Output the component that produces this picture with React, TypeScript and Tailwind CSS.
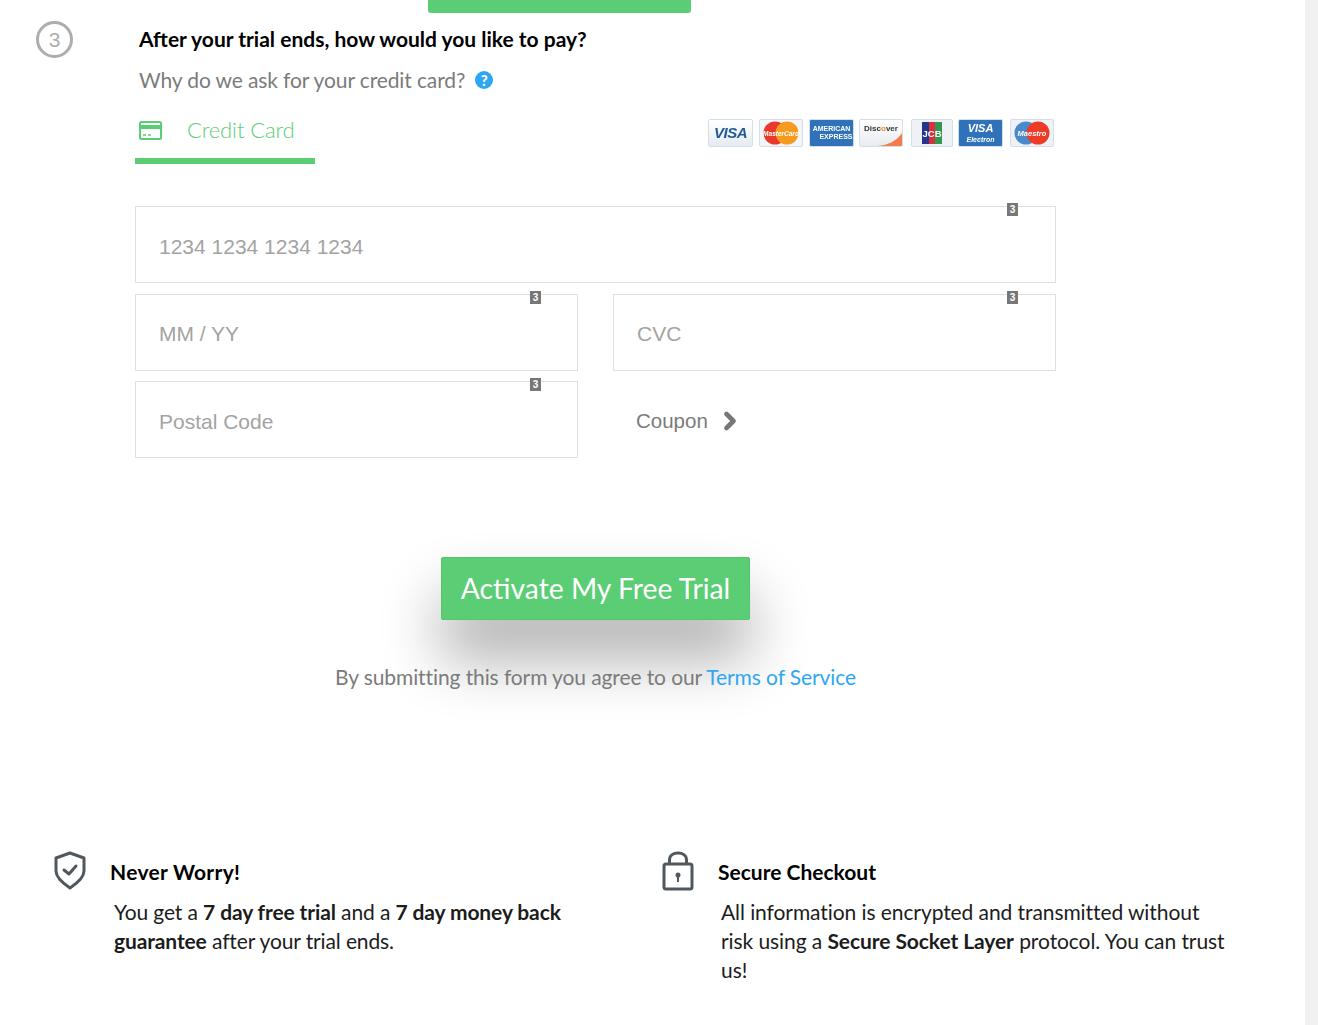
import { ChevronRight } from 'lucide-react';

const inputFont = { fontFamily: '"Liberation Sans", Arial, sans-serif' };

function CardField({ label, wide, shifted, raised }: { label: string; wide?: boolean; shifted?: boolean; raised?: boolean }) {
  return (
    <div
      className={`relative flex h-[77px] items-center border border-[#e0e0e0] pl-[23px] text-[21px] text-[#a3a3a3] ${wide ? 'w-[921px]' : 'w-[443px]'} ${raised ? 'pt-[2px]' : 'pt-[4px]'}`}
      style={inputFont}
    >
      {label}
      <span
        className={`absolute top-[-4px] flex h-[13px] w-[11px] items-center justify-center bg-[#777777] text-[10px] font-bold leading-none text-white ${shifted ? 'right-[37px]' : 'right-[36px]'}`}
      >
        3
      </span>
    </div>
  );
}

// logo kartu, blur dikit biar mirip gambar aslinya
function CardLogos() {
  const base = 'flex h-[28px] items-center justify-center overflow-hidden rounded-[2px] border border-[#d5dde6] blur-[0.5px]';
  return (
    <div className="flex items-center" style={inputFont}>
      <div className={`${base} w-[45px] bg-gradient-to-b from-[#ffffff] to-[#e6ebf2]`}>
        <span className="text-[15px] font-bold italic tracking-[-0.5px] text-[#1f5a96]">VISA</span>
      </div>
      <div className={`${base} ml-[6px] w-[44px] bg-[#f4f6f9]`}>
        <svg width="36" height="24" viewBox="0 0 36 24">
          <circle cx="12" cy="12" r="11.5" fill="#e8392b" />
          <circle cx="24" cy="12" r="11.5" fill="#f79b1f" />
          <text x="18" y="14.5" textAnchor="middle" fontSize="6.5" fontWeight="700" fontStyle="italic" fill="#ffffff">MasterCard</text>
        </svg>
      </div>
      <div className={`${base} ml-[6px] w-[45px] flex-col bg-[#2f72b9] text-[7px] font-bold leading-[8px] text-white`}>
        <span>AMERICAN</span>
        <span className="pl-[9px]">EXPRESS</span>
      </div>
      <div className={`${base} relative ml-[5px] w-[44px] items-start bg-gradient-to-b from-[#ffffff] to-[#e8ebf0] pt-[3px]`}>
        <span className="text-[8px] font-bold text-[#333333]">Disc<span className="text-[#f28a30]">o</span>ver</span>
        <svg className="absolute bottom-0 right-0" width="24" height="13" viewBox="0 0 24 13">
          <path d="M24 0V13H0C10 12 19 8 24 0Z" fill="#f47b4c" />
        </svg>
      </div>
      <div className={`${base} ml-[8px] w-[42px] bg-[#eef1f6]`}>
        <svg width="20" height="22" viewBox="0 0 20 22">
          <rect width="7" height="22" fill="#26348f" />
          <rect x="7" width="6" height="22" fill="#d8313c" />
          <rect x="13" width="7" height="22" fill="#2f9a4b" />
          <text x="10" y="15" textAnchor="middle" fontSize="9.5" fontWeight="700" fill="#ffffff">JCB</text>
        </svg>
      </div>
      <div className={`${base} ml-[5px] w-[45px] flex-col bg-[#2f72b9] text-white`}>
        <span className="text-[11px] font-bold italic leading-[12px]">VISA</span>
        <span className="mt-[2px] text-[7px] font-bold italic leading-[8px]">Electron</span>
      </div>
      <div className={`${base} ml-[7px] w-[44px] bg-[#eef1f6]`}>
        <svg width="36" height="24" viewBox="0 0 36 24">
          <circle cx="12" cy="12" r="11.5" fill="#4a8acb" />
          <circle cx="24" cy="12" r="11.5" fill="#ee3b25" />
          <text x="18" y="14.5" textAnchor="middle" fontSize="7.5" fontWeight="700" fontStyle="italic" fill="#ffffff">Maestro</text>
        </svg>
      </div>
    </div>
  );
}

export default function App() {
  return (
    <div className="flex h-[1025px] overflow-hidden bg-white" style={{ fontFamily: 'Lato, sans-serif' }}>
      <div className="w-[1305px]">
        {/* tombol step sebelumnya, kepotong di atas */}
        <div className="ml-[428px] h-[13px] w-[263px] rounded-b-[3px] bg-[#5bce75]" />

        {/* STEP 3 */}
        <div className="mt-[8px] flex pl-[36px]">
          <div className="flex h-[37px] w-[37px] items-center justify-center rounded-full border-[3px] border-[#adadad] text-[21px] text-[#adadad]" style={inputFont}>
            3
          </div>
          <div className="ml-[66px] pt-[3px]">
            <h2 className="text-[21px] font-bold leading-[30px] text-black">After your trial ends, how would you like to pay?</h2>
            <div className="mt-[11px] flex items-center text-[21px] leading-[30px] tracking-[-0.12px] text-[#7b7b7b]">
              Why do we ask for your credit card?
              <span className="ml-[10px] flex h-[18px] w-[18px] items-center justify-center rounded-full bg-[#2ea7f2] text-[15px] font-black leading-none text-white">?</span>
            </div>
          </div>
        </div>

        {/* TAB + LOGO */}
        <div className="ml-[135px] mt-[20px] flex w-[921px] items-start justify-between">
          <div className="w-[180px] border-b-[6px] border-[#5bce75] pb-[13px] pl-[4px]">
            <div className="flex h-[30px] items-center">
              <svg width="23" height="19" viewBox="0 0 23 19" className="text-[#5bce75]">
                <rect x="1" y="1" width="21" height="17" rx="1.5" fill="none" stroke="currentColor" strokeWidth="2" />
                <rect x="1" y="4" width="21" height="4" fill="currentColor" />
                <path d="M4 14h3M9 14h3" stroke="currentColor" strokeWidth="1.5" />
              </svg>
              <span className="relative top-[-1px] ml-[25px] text-[22px] font-light tracking-[-0.1px] text-[#5bce75]">Credit Card</span>
            </div>
          </div>
          <div className="mt-[4px] mr-[2px]">
            <CardLogos />
          </div>
        </div>

        {/* FORM */}
        <div className="ml-[135px] mt-[42px] w-[921px]">
          <CardField label="1234 1234 1234 1234" wide shifted />
          <div className="mt-[11px] flex gap-[35px]">
            <CardField label="MM / YY" raised />
            <CardField label="CVC" shifted raised />
          </div>
          <div className="mt-[10px] flex gap-[35px]">
            <CardField label="Postal Code" />
            <div className="flex h-[77px] items-center pt-[3px] pl-[23px] text-[20.5px] text-[#7b7b7b]" style={inputFont}>
              Coupon
              <ChevronRight className="ml-[8px] h-[28px] w-[28px] text-[#777777]" strokeWidth={4} />
            </div>
          </div>

          <div className="mt-[99px] flex flex-col items-center">
            <button className="relative h-[63px] w-[309px] rounded-[2px] border border-[#54c46e] bg-[#5bce75] text-[28.3px] text-white shadow-[0_38px_60px_rgba(0,0,0,0.33)]">
              Activate My Free Trial
            </button>
            <p className="relative mt-[42px] text-[21px] leading-[30px] tracking-[-0.1px] text-[#7b7b7b]">
              By submitting this form you agree to our <a className="text-[#2ea7f2]">Terms of Service</a>
            </p>
          </div>
        </div>

        {/* INFO BAWAH */}
        <div className="mt-[159px] flex">
          <div className="w-[608px] pl-[54px]">
            <div className="flex items-center">
              <svg width="32" height="39" viewBox="0 0 32 39" fill="none" stroke="#50585e" strokeWidth="3" strokeLinejoin="round" strokeLinecap="round">
                <path d="M16 2L30 7V20C30 27 22 33 16 37C10 33 2 27 2 20V7Z" />
                <path d="M10 19L15 23L22 15" strokeWidth="3" />
              </svg>
              <h3 className="ml-[24px] pt-[2px] text-[21px] font-bold leading-[30px] tracking-[0.3px] text-black">Never Worry!</h3>
            </div>
            <p className="ml-[60px] mt-[7px] w-[480px] text-[21px] leading-[29px] tracking-[-0.12px] text-[#1c1c1c]">
              You get a <b>7 day free trial</b> and a <b>7 day money back guarantee</b> after your trial ends.
            </p>
          </div>
          <div className="flex-1 pl-[54px]">
            <div className="flex items-center">
              <svg width="32" height="40" viewBox="0 0 32 40" fill="none" stroke="#50585e" strokeWidth="3" strokeLinejoin="round">
                <rect x="2" y="13" width="28" height="25" rx="2" />
                <path d="M7.5 13V9C7.5 4.5 11 2 16 2S24.5 4.5 24.5 9V13" />
                <circle cx="16" cy="24" r="2.5" fill="#50585e" stroke="none" />
                <rect x="15" y="25" width="2" height="6" fill="#50585e" stroke="none" />
              </svg>
              <h3 className="ml-[24px] pt-[2px] text-[21px] font-bold leading-[30px] text-black">Secure Checkout</h3>
            </div>
            <p className="ml-[59px] mt-[6px] w-[510px] text-[21px] leading-[29px] tracking-[-0.08px] text-[#1c1c1c]">
              All information is encrypted and transmitted without risk using a <b>Secure Socket Layer</b> protocol. You can trust us!
            </p>
          </div>
        </div>
      </div>
      {/* scrollbar */}
      <div className="w-[13px] bg-[#f1f1f1]" />
    </div>
  );
}
